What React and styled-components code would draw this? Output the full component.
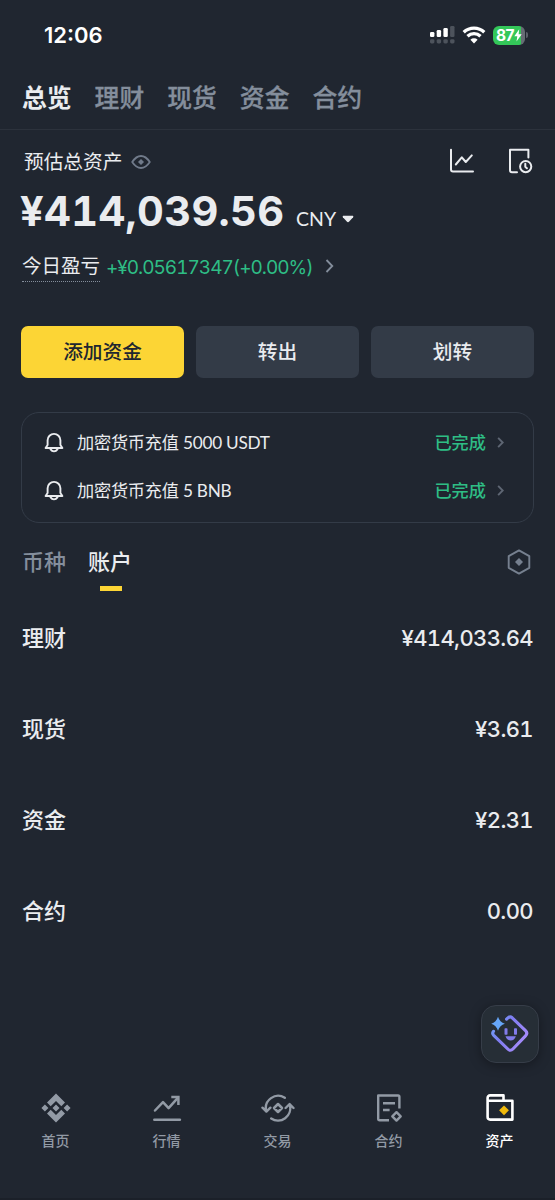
import React from "react";
import styled, { createGlobalStyle } from "styled-components";

const GlobalStyle = createGlobalStyle`
  * {
    box-sizing: border-box;
  }
  body {
    margin: 0;
    background-color: #202630;
    color: #eaecef;
    font-family: Inter, "Noto Sans CJK SC", sans-serif;
  }
  svg {
    display: block;
    flex-shrink: 0;
  }
`;

const sections = ["总览", "理财", "现货", "资金", "合约"];

const notices = [
    { id: 1, text: "加密货币充值 5000 USDT", status: "已完成" },
    { id: 2, text: "加密货币充值 5 BNB", status: "已完成" },
];

const accounts = [
    { name: "理财", value: "¥414,033.64" },
    { name: "现货", value: "¥3.61" },
    { name: "资金", value: "¥2.31" },
    { name: "合约", value: "0.00" },
];

const SignalIcon = () => (
    <svg width="25" height="18" viewBox="0 0 25 18">
        <g fill="#fff">
            <rect x="0" y="6" width="4.4" height="5" rx="1.3" />
            <rect x="6.7" y="4" width="4.4" height="7" rx="1.3" />
            <rect x="13.4" y="2" width="4.4" height="9" rx="1.3" />
        </g>
        <g fill="#4d535c">
            <rect x="20.1" y="0" width="4.4" height="11" rx="1.3" />
            <rect x="0" y="13.2" width="4.4" height="4.3" rx="1.4" />
            <rect x="6.7" y="13.2" width="4.4" height="4.3" rx="1.4" />
            <rect x="13.4" y="13.2" width="4.4" height="4.3" rx="1.4" />
            <rect x="20.1" y="13.2" width="4.4" height="4.3" rx="1.4" />
        </g>
    </svg>
);

const WifiIcon = () => (
    <svg width="24" height="18" viewBox="0 0 24 18">
        <g fill="none" stroke="#fff" strokeWidth="3.3">
            <path d="M1.7 6.2a14.8 14.8 0 0 1 20.6 0" />
            <path d="M5.5 10.3a9.4 9.4 0 0 1 13 0" />
        </g>
        <path d="M12 17.4l-3.6-3.6a5.2 5.2 0 0 1 7.2 0z" fill="#fff" />
    </svg>
);

const BoltIcon = () => (
    <svg width="8" height="13" viewBox="0 0 8 13">
        <path d="M5.2.3L.3 7.3h3L2.5 12.6 7.7 5.2H4.6z" fill="#fff" />
    </svg>
);

const EyeIcon = () => (
    <svg width="20" height="14" viewBox="0 0 20 14">
        <path d="M1.2 7Q5.2 1 10 1t8.8 6Q14.8 13 10 13T1.2 7z" fill="none" stroke="#707a8a" strokeWidth="1.8" strokeLinejoin="round" />
        <path d="M10 4l3 3-3 3-3-3z" fill="#707a8a" />
    </svg>
);

const ChartIcon = () => (
    <svg width="26" height="26" viewBox="0 0 26 26" fill="none" stroke="#eaecef" strokeWidth="2" strokeLinecap="round" strokeLinejoin="round">
        <path d="M2 1.8v19.7q0 2 2 2H24" />
        <path d="M6.8 16.5l6-7.2 4 4.7 6-6.6" />
    </svg>
);

const HistoryIcon = () => (
    <svg width="26" height="26" viewBox="0 0 26 26" fill="none" stroke="#eaecef" strokeWidth="2" strokeLinecap="round" strokeLinejoin="round">
        <path d="M10 24.3H5q-2 0-2-2V1.8h18.4V9.5" />
        <circle cx="18.7" cy="18.6" r="5.6" />
        <path d="M18.3 15.8v3l1.6 1.5" />
    </svg>
);

const Chevron = ({ width, height, color, weight = 1.8 }) => (
    <svg width={width} height={height} viewBox="0 0 8 14" fill="none" stroke={color} strokeWidth={weight}>
        <path d="M1 1l5.8 6L1 13" />
    </svg>
);

const BellIcon = () => (
    <svg width="20" height="21" viewBox="0 0 20 21" fill="none" stroke="#eaecef" strokeWidth="1.9" strokeLinecap="round" strokeLinejoin="round">
        <path d="M3.6 13V8.3a6.4 6.4 0 0 1 12.8 0V13l2 3H1.6z" />
        <path d="M6 16.4q1.5 3 4 3t4-3" />
    </svg>
);

const HexIcon = () => (
    <svg width="24" height="26" viewBox="0 0 24 26">
        <path d="M12 1.4l10.3 5.8v11.6L12 24.6 1.7 18.8V7.2z" fill="none" stroke="#76808f" strokeWidth="1.9" strokeLinejoin="round" />
        <path d="M12 9l4 4-4 4-4-4z" fill="#76808f" />
    </svg>
);

const HomeIcon = () => (
    <svg width="30" height="30" viewBox="0 0 30 30" fill="#929aa5">
        <path d="M15 .6l9 9-3.7 3.7L15 8l-5.3 5.3L6 9.6z" />
        <path d="M15 29.4l9-9-3.7-3.7L15 22l-5.3-5.3L6 20.4z" />
        <path d="M15 11.5l3.5 3.5-3.5 3.5-3.5-3.5zM3.9 11.5L7.4 15l-3.5 3.5L.4 15zM26.1 11.5l3.5 3.5-3.5 3.5-3.5-3.5z" />
    </svg>
);

const MarketIcon = () => (
    <svg width="30" height="30" viewBox="0 0 30 30" fill="none" stroke="#929aa5" strokeWidth="2.5" strokeLinecap="round" strokeLinejoin="round">
        <path d="M3 17.5l8-8.3 5.6 6 9.2-10.4" />
        <path d="M19.3 4H26.4v8" strokeLinecap="butt" strokeLinejoin="miter" />
        <path d="M2.3 26.7h25.6" />
    </svg>
);

const TradeIcon = () => (
    <svg width="34" height="30" viewBox="0 0 34 30" fill="none" stroke="#929aa5" strokeWidth="2.4" strokeLinecap="round" strokeLinejoin="round">
        <path d="M23.8 4.8A12.3 12.3 0 0 0 5.2 18M1.5 14.7l3.9 3.9 4-3.9" />
        <path d="M10.2 25.5A12.3 12.3 0 0 0 28.8 12M24.6 15l4-3.9 3.9 3.9" />
        <path d="M17 11l4 4-4 4-4-4z" strokeWidth="2.5" />
    </svg>
);

const FuturesIcon = () => (
    <svg width="30" height="30" viewBox="0 0 30 30" fill="none" stroke="#929aa5" strokeWidth="2.4" strokeLinecap="butt" strokeLinejoin="round">
        <path d="M15 27.3H5.7q-1.5 0-1.5-1.5V2.5h19.9q1.3 0 1.3 1.3V15.6" />
        <path d="M9 10.2h12M9 17h6.6" />
        <path d="M22.5 19.2l4.2 4.2-4.2 4.2-4.2-4.2z" />
    </svg>
);

const WalletIcon = () => (
    <svg width="30" height="30" viewBox="0 0 30 30" fill="none" stroke="#fff" strokeWidth="2.6" strokeLinejoin="round">
        <path d="M2.6 8V5q0-2.6 2.6-2.6h13.3V8M2.6 7.8h24.8v18.8H5.2q-2.6 0-2.6-2.6z" />
        <path d="M19 12.4l4.9 4.9-4.9 4.9-4.9-4.9z" fill="#f0b90b" stroke="none" />
    </svg>
);

const AssistantIcon = () => (
    <svg width="40" height="40" viewBox="0 0 40 40">
        <defs>
            <linearGradient id="face" x1="0" y1="0" x2="1" y2="0.6">
                <stop offset="0" stopColor="#6ba6f8" />
                <stop offset="0.45" stopColor="#7f7cf0" />
                <stop offset="1" stopColor="#a58bfa" />
            </linearGradient>
        </defs>
        <path
            d="M16.6 5.2l1.6-1.5q2-1.6 4 .1L35.5 16.7q2.6 2.6 0 5.2L22.9 35q-2.5 2.6-5.1 0L3.7 21.3q-1.9-2-.2-4"
            fill="none"
            stroke="url(#face)"
            strokeWidth="3.1"
            strokeLinecap="round"
            strokeLinejoin="round"
        />
        <path d="M8 2.8q1.7 5.5 6.9 6.9-5.2 1.7-6.9 7Q6.3 11.4 1.2 9.7 6.3 8.3 8 2.8z" fill="#66a6f8" />
        <g fill="#817bea">
            <rect x="14.5" y="14.2" width="3" height="6.6" rx=".8" />
            <rect x="24" y="14.2" width="3" height="6.6" rx=".8" />
            <path d="M15.5 22.3h10.4q-1.5 4.2-5.2 4.2t-5.2-4.2z" />
        </g>
    </svg>
);

const navItems = [
    { label: "首页", icon: <HomeIcon /> },
    { label: "行情", icon: <MarketIcon /> },
    { label: "交易", icon: <TradeIcon /> },
    { label: "合约", icon: <FuturesIcon /> },
    { label: "资产", icon: <WalletIcon />, active: true },
];

const App = () => {
    return (
        <Screen>
            <GlobalStyle />
            <StatusBar>
                <Clock>12:06</Clock>
                <StatusIcons>
                    <SignalIcon />
                    <WifiIcon />
                    <BatteryWrap>
                        <Battery>
                            87
                            <BoltIcon />
                        </Battery>
                        <BatteryTip />
                    </BatteryWrap>
                </StatusIcons>
            </StatusBar>

            <SectionTabs>
                {sections.map((name, i) => (
                    <SectionTab key={name} $active={i === 0}>{name}</SectionTab>
                ))}
            </SectionTabs>

            <Balance>
                <BalanceHeader>
                    <BalanceLabel>预估总资产</BalanceLabel>
                    <EyeIcon />
                    <HeaderActions>
                        <ChartIcon />
                        <HistoryIcon />
                    </HeaderActions>
                </BalanceHeader>
                <AmountRow>
                    <Amount>¥414,039.56</Amount>
                    <Currency>CNY</Currency>
                    <svg width="12" height="8" viewBox="0 0 12 8">
                        <path d="M1.2.8h9.6q1 .4.3 1.4L7.2 6.6Q6 7.7 4.8 6.6L.9 2.2Q.2 1.2 1.2.8z" fill="#eaecef" />
                    </svg>
                </AmountRow>
                <ProfitRow>
                    <ProfitLabel>今日盈亏</ProfitLabel>
                    <Profit>+¥0.05617347(+0.00%)</Profit>
                    <Chevron width="9" height="14" color="#848e9c" />
                </ProfitRow>
            </Balance>

            <Actions>
                <ActionButton $primary>添加资金</ActionButton>
                <ActionButton>转出</ActionButton>
                <ActionButton>划转</ActionButton>
            </Actions>

            <NoticeCard>
                {notices.map((item) => (
                    <Notice key={item.id}>
                        <BellIcon />
                        <NoticeText>{item.text}</NoticeText>
                        <NoticeStatus>{item.status}</NoticeStatus>
                        <Chevron width="7" height="11" color="#5e6673" weight={2.4} />
                    </Notice>
                ))}
            </NoticeCard>

            <ListTabs>
                <ListTab>币种</ListTab>
                <ListTab $active>账户</ListTab>
                <HexIcon />
            </ListTabs>

            <AccountList>
                {accounts.map((item) => (
                    <Account key={item.name}>
                        <AccountName>{item.name}</AccountName>
                        <AccountValue>{item.value}</AccountValue>
                    </Account>
                ))}
            </AccountList>

            <Assistant>
                <AssistantIcon />
            </Assistant>

            <BottomNav>
                {navItems.map((item) => (
                    <NavItem key={item.label} $active={item.active}>
                        {item.icon}
                        <span>{item.label}</span>
                    </NavItem>
                ))}
            </BottomNav>
        </Screen>
    );
};

const Screen = styled.div`
  position: relative;
  display: flex;
  flex-direction: column;
  width: 555px;
  height: 1200px;
  overflow: hidden;
  background-color: #202630;
  border-bottom: 2px solid #1b2029;
`;

const StatusBar = styled.header`
  display: flex;
  align-items: center;
  justify-content: space-between;
  height: 70px;
  padding: 0 27px 0 44px;
`;

const Clock = styled.span`
  font-size: 22px;
  font-weight: 600;
  color: #fff;
`;

const StatusIcons = styled.div`
  display: flex;
  align-items: center;
  gap: 7px;
`;

const BatteryWrap = styled.div`
  display: flex;
  align-items: center;
  gap: 1px;
`;

const Battery = styled.div`
  display: flex;
  align-items: center;
  justify-content: center;
  width: 32px;
  height: 19px;
  border-radius: 6px;
  background: linear-gradient(90deg, #34c759 28px, #666c74 28px);
  color: #fff;
  font-size: 15.5px;
  font-weight: 700;
  letter-spacing: -0.5px;
`;

const BatteryTip = styled.div`
  width: 2px;
  height: 6px;
  border-radius: 0 2px 2px 0;
  background-color: #5a6069;
`;

const SectionTabs = styled.nav`
  display: flex;
  gap: 23px;
  height: 60px;
  padding: 1px 22px 0;
  line-height: 55px;
  border-bottom: 1px solid #2c323c;
`;

const SectionTab = styled.span`
  font-size: 24.8px;
  font-weight: ${(props) => (props.$active ? 700 : 500)};
  color: ${(props) => (props.$active ? "#eaecef" : "#848e9c")};
  -webkit-text-stroke: ${(props) => (props.$active ? "0" : "0.3px")} currentColor;
`;

const Balance = styled.section`
  padding: 14px 22px 0;
`;

const BalanceHeader = styled.div`
  display: flex;
  align-items: center;
  gap: 9px;
  height: 36px;
  padding-left: 2px;
`;

const BalanceLabel = styled.span`
  font-size: 19.7px;
  line-height: 36px;
`;

const HeaderActions = styled.div`
  display: flex;
  gap: 32px;
  margin: -2px 0 0 auto;
`;

const AmountRow = styled.div`
  display: flex;
  align-items: center;
  height: 64px;
  padding-bottom: 2px;
`;

const Amount = styled.span`
  margin-left: -2px;
  width: 265px;
  font-size: 41.5px;
  font-weight: 700;
  line-height: 62px;
  font-variant-numeric: tabular-nums;
  letter-spacing: 0.35px;
`;

const Currency = styled.span`
  margin: 15px 6px 0 11px;
  font-family: Lato, sans-serif;
  font-size: 19.5px;

  & + svg {
    margin-top: 16px;
  }
`;

const ProfitRow = styled.div`
  display: flex;
  align-items: center;
  height: 44px;
`;

const ProfitLabel = styled.span`
  height: 32px;
  font-size: 19.5px;
  line-height: 32px;
  border-bottom: 1px dotted #848e9c;
`;

const Profit = styled.span`
  width: 206px;
  margin: 2px 13px 0 6px;
  font-size: 19px;
  font-variant-numeric: tabular-nums;
  letter-spacing: -1px;
  white-space: nowrap;
  color: #2ebd85;
`;

const Actions = styled.div`
  display: grid;
  grid-template-columns: repeat(3, 1fr);
  gap: 12px;
  padding: 0 21px;
  margin-top: 38px;
`;

const ActionButton = styled.button`
  height: 52px;
  padding: 0 0 3px;
  border: 0;
  border-radius: 7px;
  background-color: ${(props) => (props.$primary ? "#fcd535" : "#333b47")};
  color: ${(props) => (props.$primary ? "#202630" : "#eaecef")};
  font-family: inherit;
  font-size: 19.7px;
  font-weight: 500;
`;

const NoticeCard = styled.section`
  height: 111px;
  margin: 34px 21px 0;
  padding: 5px 29px 0 22px;
  border: 1.5px solid #333b47;
  border-radius: 18px;
`;

const Notice = styled.div`
  display: flex;
  align-items: center;
  height: 48.5px;
`;

const NoticeText = styled.span`
  margin: 1px 0 0 13px;
  font-family: Lato, "Noto Sans CJK SC", sans-serif;
  font-size: 17.2px;
  line-height: 24px;
  letter-spacing: -0.23px;
`;

const NoticeStatus = styled.span`
  margin: -2px 11px 0 auto;
  font-size: 17.2px;
  font-weight: 500;
  color: #2ebd85;
`;

const ListTabs = styled.div`
  display: flex;
  align-items: center;
  gap: 22px;
  height: 78px;
  padding: 0 24px 0 22px;

  svg {
    margin-left: auto;
  }
`;

const ListTab = styled.span`
  position: relative;
  font-size: 22px;
  font-weight: 500;
  line-height: 32px;
  color: ${(props) => (props.$active ? "#eaecef" : "#848e9c")};

  &::after {
    content: "";
    display: ${(props) => (props.$active ? "block" : "none")};
    position: absolute;
    left: 12px;
    bottom: -13px;
    width: 22px;
    height: 5px;
    background-color: #fcd535;
  }
`;

const AccountList = styled.section`
  padding: 0 22px;
  margin-top: -9px;
`;

const Account = styled.div`
  display: flex;
  align-items: center;
  justify-content: space-between;
  height: 91px;
`;

const AccountName = styled.span`
  font-size: 22px;
  font-weight: 500;
  line-height: 32px;
`;

const AccountValue = styled.span`
  font-size: 22px;
  font-weight: 500;
  font-variant-numeric: tabular-nums;
  letter-spacing: -0.6px;
`;

const Assistant = styled.div`
  position: absolute;
  left: 481px;
  top: 1005px;
  display: grid;
  place-items: center;
  width: 58px;
  height: 58px;
  border: 1px solid #363d48;
  border-radius: 15px;
  background-color: #262e36;
  box-shadow: 0 2px 12px rgba(0, 0, 0, 0.35);
`;

const BottomNav = styled.nav`
  display: grid;
  grid-template-columns: repeat(5, 1fr);
  height: 105px;
  margin-top: auto;
`;

const NavItem = styled.div`
  display: flex;
  flex-direction: column;
  align-items: center;
  gap: 8px;
  font-size: 14px;
  line-height: 20px;
  color: ${(props) => (props.$active ? "#fff" : "#929aa5")};
  font-weight: 500;
`;

export default App;
